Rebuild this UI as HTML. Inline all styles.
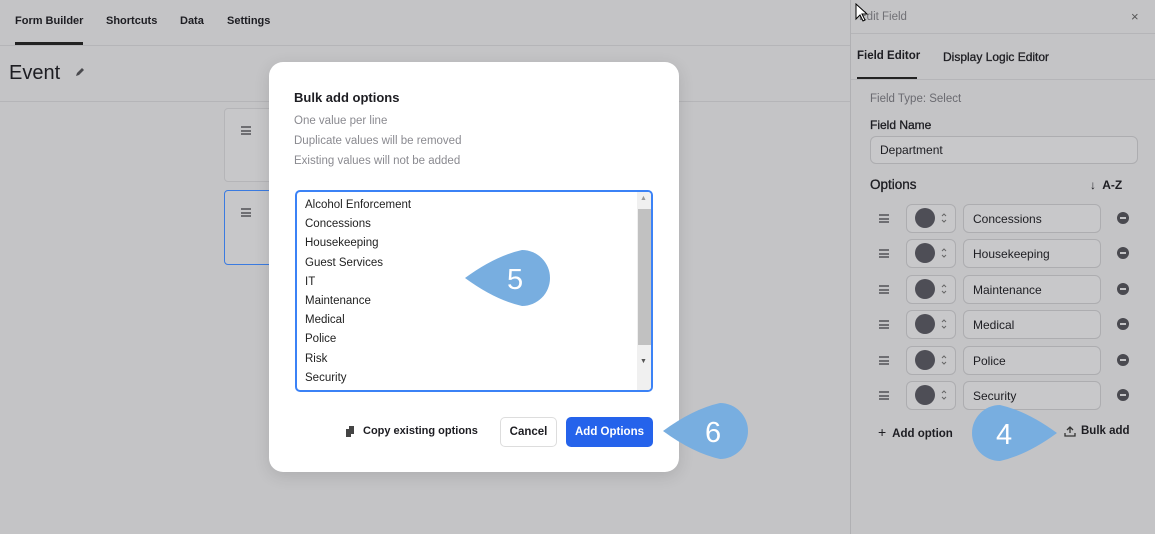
<!DOCTYPE html>
<html><head><meta charset="utf-8"><style>
*{box-sizing:border-box;margin:0;padding:0}
body{width:1155px;height:534px;overflow:hidden;background:#c4c4c6;font-family:"Liberation Sans",Arial,sans-serif;color:#1d1d22;position:relative}
.a{position:absolute;white-space:nowrap}
.b{font-weight:bold}
.in{position:absolute;border:1px solid #adadb0;border-radius:6px;background:#c8c8ca;font-size:12px;padding-left:9px;display:flex;align-items:center}
.ham{position:absolute;width:10px;height:9px;border-top:2px solid #6e6e72;border-bottom:2px solid #6e6e72}
.ham:after{content:"";position:absolute;left:0;right:0;top:1.5px;border-top:2px solid #6e6e72}
.minus{position:absolute;width:12px;height:12px;border-radius:50%;background:#4a4a50}
.minus:after{content:"";position:absolute;left:3px;right:3px;top:5px;height:2px;background:#c4c4c6}
.chev{position:absolute;width:6px;height:12px}
.ta{font-size:11.5px;color:#222}
</style></head><body>
<!-- top nav -->
<div class="a b" style="left:15px;top:15px;font-size:11px">Form Builder</div>
<div class="a b" style="left:106px;top:15px;font-size:11px">Shortcuts</div>
<div class="a b" style="left:180px;top:15px;font-size:11px">Data</div>
<div class="a b" style="left:227px;top:15px;font-size:11px">Settings</div>
<div class="a" style="left:15px;top:42px;width:68px;height:3px;background:#222"></div>
<div class="a" style="left:0;top:45px;width:850px;height:1px;background:#b5b5b8"></div>
<div class="a" style="left:9px;top:62px;font-size:20px">Event</div>
<svg class="a" style="left:74px;top:66px" width="12" height="12"><path d="M2 10 L3 7 L8 2 L10 4 L5 9 Z" fill="#4a4a4e"/></svg>
<div class="a" style="left:0;top:101px;width:850px;height:1px;background:#b5b5b8"></div>
<div class="a" style="left:224px;top:108px;width:60px;height:74px;border:1px solid #b5b5b8;border-radius:4px;background:#c7c7c9"></div>
<div class="a" style="left:224px;top:190px;width:60px;height:75px;border:1px solid #3b7be0;border-radius:4px;background:#c7c7c9"></div>
<div class="ham" style="left:241px;top:126px"></div>
<div class="ham" style="left:241px;top:208px"></div>

<!-- right panel -->
<div class="a" style="left:850px;top:0;width:1px;height:534px;background:#b0b0b3"></div>
<div class="a" style="left:859px;top:11px;font-size:11.5px;color:#707075">Edit Field</div>
<div class="a" style="left:1131px;top:9px;font-size:13px;color:#555">×</div>
<div class="a" style="left:851px;top:33px;width:304px;height:1px;background:#b5b5b8"></div>
<div class="a b" style="left:857px;top:50px;font-size:11.5px">Field Editor</div>
<div class="a" style="left:943px;top:50px;font-size:12px;-webkit-text-stroke:.3px #1d1d22">Display Logic Editor</div>
<div class="a" style="left:857px;top:77px;width:60px;height:2px;background:#222"></div>
<div class="a" style="left:851px;top:79px;width:304px;height:1px;background:#b5b5b8"></div>
<div class="a" style="left:870px;top:93px;font-size:11.5px;color:#6a6a70">Field Type: Select</div>
<div class="a" style="left:870px;top:118px;font-size:12px;-webkit-text-stroke:.3px #1d1d22">Field Name</div>
<div class="in" style="left:870px;top:136px;width:268px;height:28px">Department</div>
<div class="a" style="left:870px;top:177px;font-size:13.5px;-webkit-text-stroke:.3px #1d1d22">Options</div>
<div class="a b" style="left:1090px;top:178px;font-size:12px">↓&nbsp; A-Z</div>

<div class="ham" style="left:879px;top:214px"></div><div class="in" style="left:906px;top:204px;width:50px;height:29px"></div><div class="a" style="left:915px;top:208px;width:20px;height:20px;border-radius:50%;background:#4e4e56"></div><svg class="chev" style="left:941px;top:212px"><path d="M1 4 L3 2 L5 4 M1 8 L3 10 L5 8" stroke="#666" fill="none"/></svg><div class="in" style="left:963px;top:204px;width:138px;height:29px">Concessions</div><div class="minus" style="left:1117px;top:212px"></div>
<div class="ham" style="left:879px;top:249px"></div><div class="in" style="left:906px;top:239px;width:50px;height:29px"></div><div class="a" style="left:915px;top:243px;width:20px;height:20px;border-radius:50%;background:#4e4e56"></div><svg class="chev" style="left:941px;top:247px"><path d="M1 4 L3 2 L5 4 M1 8 L3 10 L5 8" stroke="#666" fill="none"/></svg><div class="in" style="left:963px;top:239px;width:138px;height:29px">Housekeeping</div><div class="minus" style="left:1117px;top:247px"></div>
<div class="ham" style="left:879px;top:285px"></div><div class="in" style="left:906px;top:275px;width:50px;height:29px"></div><div class="a" style="left:915px;top:279px;width:20px;height:20px;border-radius:50%;background:#4e4e56"></div><svg class="chev" style="left:941px;top:283px"><path d="M1 4 L3 2 L5 4 M1 8 L3 10 L5 8" stroke="#666" fill="none"/></svg><div class="in" style="left:963px;top:275px;width:138px;height:29px">Maintenance</div><div class="minus" style="left:1117px;top:283px"></div>
<div class="ham" style="left:879px;top:320px"></div><div class="in" style="left:906px;top:310px;width:50px;height:29px"></div><div class="a" style="left:915px;top:314px;width:20px;height:20px;border-radius:50%;background:#4e4e56"></div><svg class="chev" style="left:941px;top:318px"><path d="M1 4 L3 2 L5 4 M1 8 L3 10 L5 8" stroke="#666" fill="none"/></svg><div class="in" style="left:963px;top:310px;width:138px;height:29px">Medical</div><div class="minus" style="left:1117px;top:318px"></div>
<div class="ham" style="left:879px;top:356px"></div><div class="in" style="left:906px;top:346px;width:50px;height:29px"></div><div class="a" style="left:915px;top:350px;width:20px;height:20px;border-radius:50%;background:#4e4e56"></div><svg class="chev" style="left:941px;top:354px"><path d="M1 4 L3 2 L5 4 M1 8 L3 10 L5 8" stroke="#666" fill="none"/></svg><div class="in" style="left:963px;top:346px;width:138px;height:29px">Police</div><div class="minus" style="left:1117px;top:354px"></div>
<div class="ham" style="left:879px;top:391px"></div><div class="in" style="left:906px;top:381px;width:50px;height:29px"></div><div class="a" style="left:915px;top:385px;width:20px;height:20px;border-radius:50%;background:#4e4e56"></div><svg class="chev" style="left:941px;top:389px"><path d="M1 4 L3 2 L5 4 M1 8 L3 10 L5 8" stroke="#666" fill="none"/></svg><div class="in" style="left:963px;top:381px;width:138px;height:29px">Security</div><div class="minus" style="left:1117px;top:389px"></div>
<div class="a b" style="left:878px;top:424px;font-size:11.5px"><span style="font-weight:normal;font-size:14px">+</span>&nbsp; Add option</div>
<svg class="a" style="left:1064px;top:425px" width="12" height="12"><path d="M6 8 V2 M3 5 L6 2 L9 5 M1 8 V11 H11 V8" stroke="#333" stroke-width="1.3" fill="none"/></svg>
<div class="a b" style="left:1081px;top:425px;font-size:11.5px">Bulk add</div>

<!-- marker 4 -->
<svg class="a" style="left:960px;top:400px" width="110" height="70"><g transform="translate(40,33)"><path d="M57 0 Q27 -22 0 -28 A28 28 0 1 0 0 28 Q27 22 57 0Z" fill="#78aee0"/><text x="4" y="11" font-size="29" fill="#fff" text-anchor="middle" font-family="Liberation Sans">4</text></g></svg>

<!-- modal -->
<div class="a" style="left:269px;top:62px;width:410px;height:410px;background:#fff;border-radius:14px;box-shadow:0 4px 16px rgba(0,0,0,.12)"></div>
<div class="a b" style="left:294px;top:90px;font-size:13px">Bulk add options</div>
<div class="a" style="left:294px;top:115px;font-size:11.5px;color:#8a8a90">One value per line</div>
<div class="a" style="left:294px;top:135px;font-size:11.5px;color:#8a8a90">Duplicate values will be removed</div>
<div class="a" style="left:294px;top:155px;font-size:11.5px;color:#8a8a90">Existing values will not be added</div>
<div class="a" style="left:295px;top:190px;width:358px;height:202px;border:2px solid #3b82f6;border-radius:5px;overflow:hidden">
 <div class="a" style="left:340px;top:0;width:16px;height:200px;background:#f0f0f0"></div>
 <div class="a" style="left:341px;top:17px;width:13px;height:136px;background:#c1c1c1"></div>
 <div class="a" style="left:343px;top:3px;font-size:7px;color:#999">▲</div>
 <div class="a" style="left:343px;top:166px;font-size:7px;color:#555">▼</div>
</div>
<div class="a ta" style="left:305px;top:196px;line-height:19.2px">Alcohol Enforcement<br>Concessions<br>Housekeeping<br>Guest Services<br>IT<br>Maintenance<br>Medical<br>Police<br>Risk<br>Security</div>
<svg class="a" style="left:345px;top:425px" width="12" height="14"><path d="M4 1 L9 1 L9 9 L4 9Z M1 4 L6 4 L6 12 L1 12Z" fill="#444"/></svg>
<div class="a b" style="left:363px;top:425px;font-size:11px">Copy existing options</div>
<div class="a b" style="left:500px;top:417px;width:57px;height:30px;border:1px solid #ddd;border-radius:5px;font-size:11.5px;display:flex;align-items:center;justify-content:center">Cancel</div>
<div class="a b" style="left:566px;top:417px;width:87px;height:30px;background:#2563eb;border-radius:5px;font-size:11.5px;color:#fff;display:flex;align-items:center;justify-content:center">Add Options</div>

<!-- marker 5 -->
<svg class="a" style="left:460px;top:245px" width="100" height="70"><g transform="translate(62,33)"><path d="M-57 0 Q-27 -22 0 -28 A28 28 0 1 1 0 28 Q-27 22 -57 0Z" fill="#78aee0"/><text x="-7" y="11" font-size="29" fill="#fff" text-anchor="middle" font-family="Liberation Sans">5</text></g></svg>
<!-- marker 6 -->
<svg class="a" style="left:658px;top:398px" width="100" height="70"><g transform="translate(62,33)"><path d="M-57 0 Q-27 -22 0 -28 A28 28 0 1 1 0 28 Q-27 22 -57 0Z" fill="#78aee0"/><text x="-7" y="11" font-size="29" fill="#fff" text-anchor="middle" font-family="Liberation Sans">6</text></g></svg>

<!-- cursor -->
<svg class="a" style="left:855px;top:3px" width="14" height="20"><path d="M1 1 L1 16 L5 12 L8 18 L10 17 L7 11 L12 11Z" fill="#fff" stroke="#000" stroke-width="1"/></svg>
</body></html>
